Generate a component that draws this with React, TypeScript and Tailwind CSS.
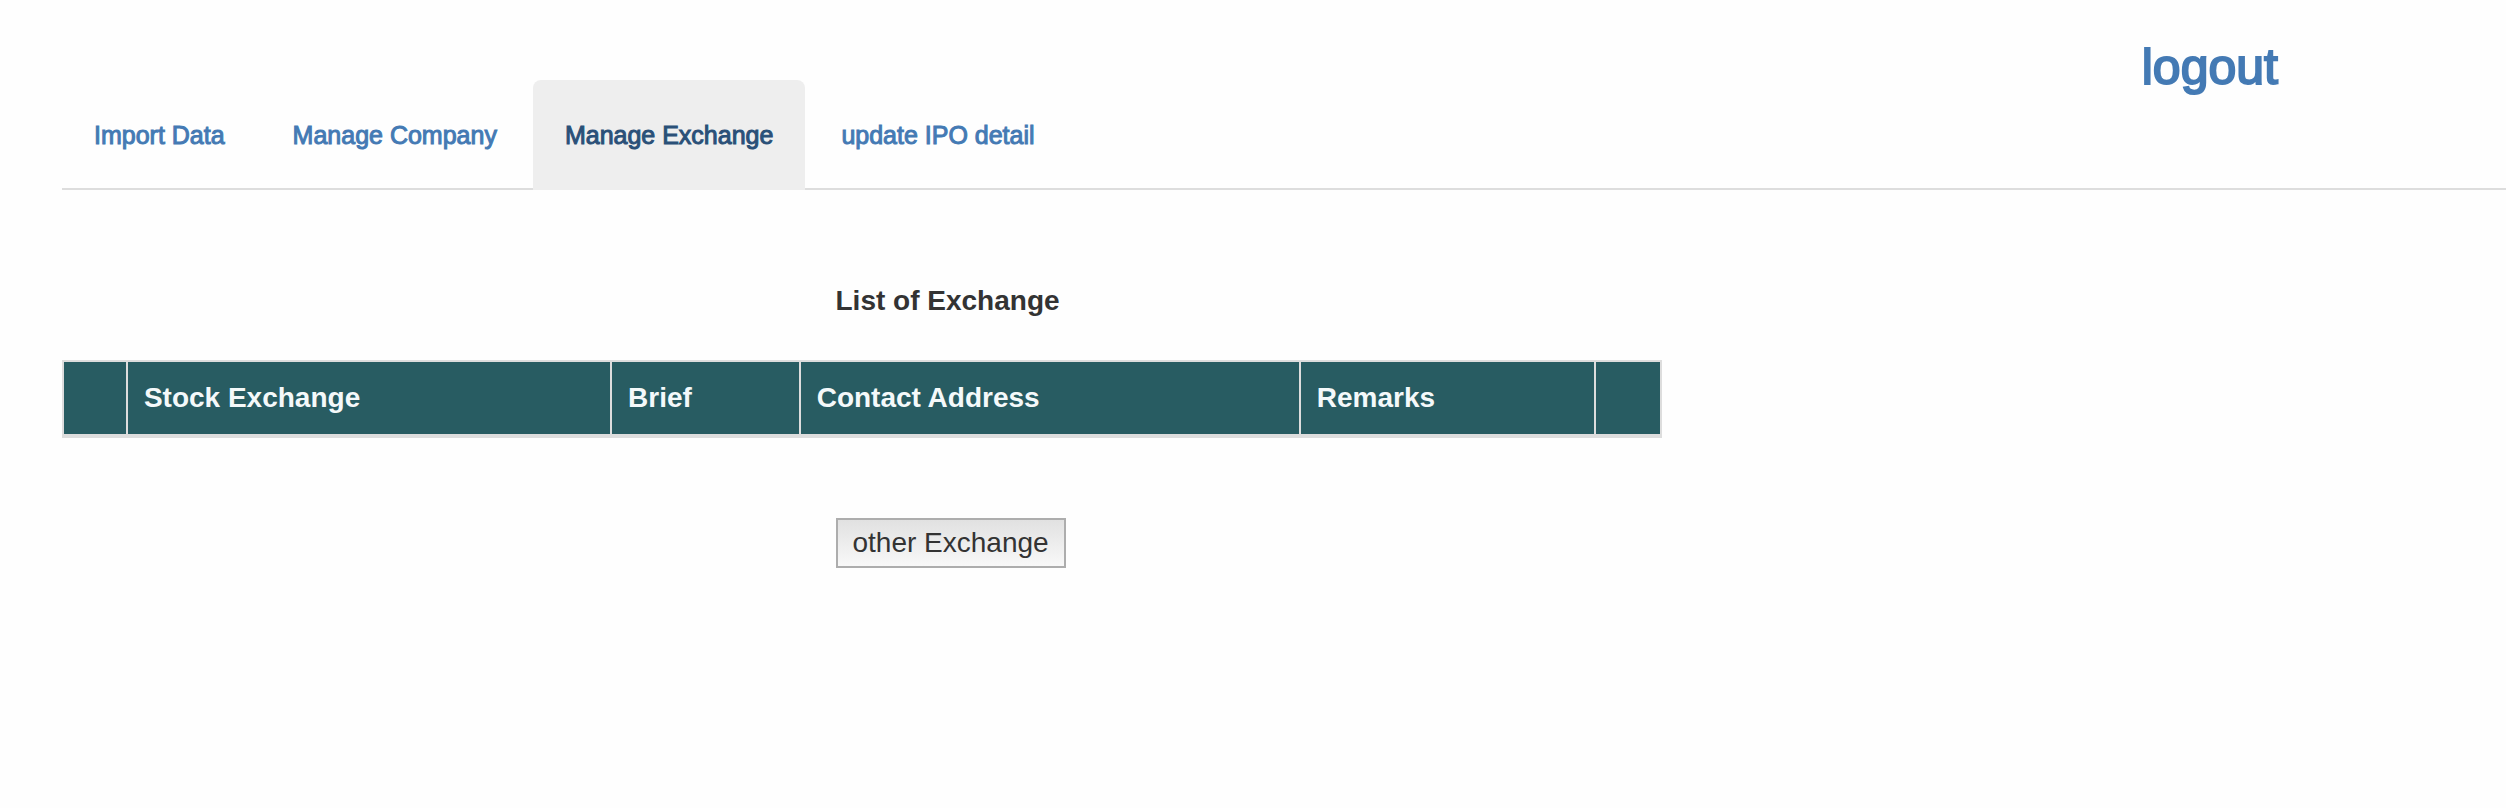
const tabs = ["Import Data", "Manage Company", "Manage Exchange", "update IPO detail"];

const columns = [
  { label: "", width: "w-[4%]" },
  { label: "Stock Exchange", width: "w-[30.3%]" },
  { label: "Brief", width: "w-[11.8%]" },
  { label: "Contact Address", width: "w-[31.3%]" },
  { label: "Remarks", width: "w-[18.5%]" },
  { label: "", width: "w-[4.1%]" },
];

export default function App() {
  const current = "Manage Exchange";

  return (
    <div className="min-h-screen bg-[#fefefe] pl-[62px] font-['Liberation_Sans',Arial,sans-serif] text-[28px] leading-10 text-[#333333]">
      <header className="flex items-start justify-between border-b-2 border-[#dddddd] pt-10">
        <nav aria-label="Main" className="-mb-[2px] flex gap-1 pt-10">
          {tabs.map((tab) => (
            <a
              key={tab}
              href="#"
              aria-current={tab === current ? "page" : undefined}
              className={
                tab === current
                  ? "rounded-t-lg bg-[#eeeeee] px-8 py-[38px] text-[25px] leading-[34px] text-[#2a5078] [-webkit-text-stroke:1px]"
                  : "rounded-t-lg px-8 py-[38px] text-[25px] leading-[34px] text-[#447ab4] [-webkit-text-stroke:1px]"
              }
            >
              {tab}
            </a>
          ))}
        </nav>
        <a
          href="#"
          className="mr-[228px] text-[50px] leading-[54px] text-[#447ab4] [-webkit-text-stroke:2px]"
        >
          logout
        </a>
      </header>

      <main className="pt-[91px]">
        <h1 className="ml-[31.65%] font-bold">List of Exchange</h1>
        <table className="mt-[39px] w-full max-w-[1600px] table-fixed border-separate border-spacing-0 border-2 border-r-0 border-b-4 border-[#dddddd] bg-[#285c62]">
          <thead>
            <tr>
              {columns.map((column, index) => (
                <th
                  key={index}
                  scope="col"
                  className={`${column.width} h-[72px] border-r-2 border-[#dddddd] px-4 text-left font-bold text-[#f4f9fa]`}
                >
                  {column.label}
                </th>
              ))}
            </tr>
          </thead>
        </table>
        <button
          type="button"
          className="mt-20 ml-[31.65%] h-[50px] border-2 border-[#adadad] bg-linear-to-b from-[#e1e1e1] to-[#f8f8f8] px-[15px] leading-[46px]"
        >
          other Exchange
        </button>
      </main>
    </div>
  );
}
